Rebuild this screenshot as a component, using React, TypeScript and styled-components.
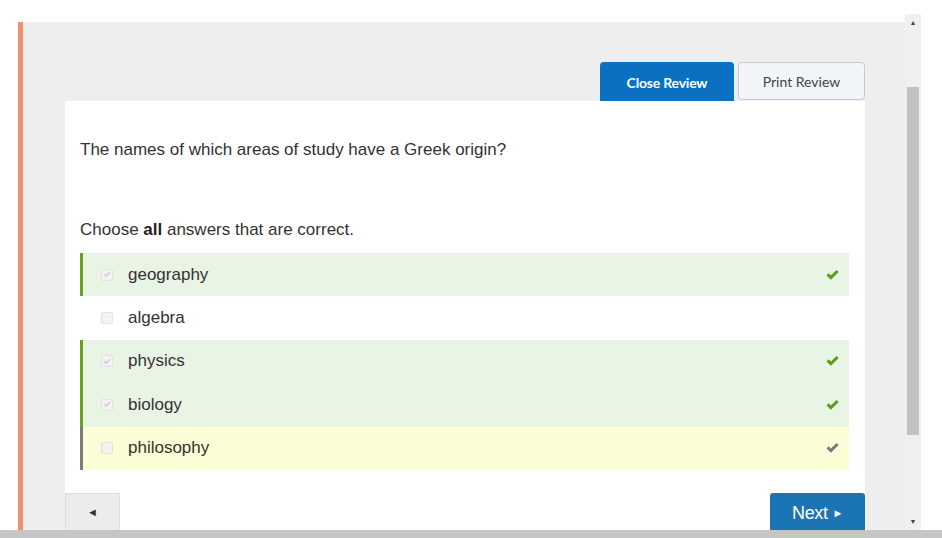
import styled, { createGlobalStyle } from 'styled-components'

const GlobalStyle = createGlobalStyle`
  html, body {
    margin: 0;
    padding: 0;
    background: #fff;
    overflow: hidden;
  }
  * { box-sizing: border-box; }
`

type Status = 'correct' | 'missed' | 'none'

const answers: { label: string; checked: boolean; status: Status }[] = [
  { label: 'geography', checked: true, status: 'correct' },
  { label: 'algebra', checked: false, status: 'none' },
  { label: 'physics', checked: true, status: 'correct' },
  { label: 'biology', checked: true, status: 'correct' },
  { label: 'philosophy', checked: false, status: 'missed' },
]

function Tick({ color }: { color: string }) {
  return (
    <svg width="15" height="12" viewBox="0 0 14 12">
      <path d="M1 6.4 L3.2 4.3 L5.4 6.6 L11 1 L13.2 3.1 L5.4 10.8 Z" fill={color} />
    </svg>
  )
}

export default function App() {
  return (
    <Page>
      <GlobalStyle />
      <Top>
        <LeftGap />
        <Main>
          <ButtonRow>
            <CloseButton>Close Review</CloseButton>
            <PrintButton>Print Review</PrintButton>
          </ButtonRow>
          <Card>
            <Body>
              <Question>The names of which areas of study have a Greek origin?</Question>
              <Instruction>
                Choose <b>all</b> answers that are correct.
              </Instruction>
              <Options>
                {answers.map((a) => (
                  <Option key={a.label} status={a.status}>
                    <Box>{a.checked && <Tick color="#d0d0d0" />}</Box>
                    <Label>{a.label}</Label>
                    {a.status !== 'none' && (
                      <Mark>
                        <Tick color={a.status === 'correct' ? '#5c9c18' : '#7a7a7a'} />
                      </Mark>
                    )}
                  </Option>
                ))}
              </Options>
            </Body>
            <Nav>
              <PrevButton>◄</PrevButton>
              <NextButton>
                Next <Pointer>►</Pointer>
              </NextButton>
            </Nav>
          </Card>
        </Main>
        <Scrollbar>
          <Arrow>▲</Arrow>
          <Track>
            <Thumb />
          </Track>
          <Arrow>▼</Arrow>
        </Scrollbar>
        <RightGap />
      </Top>
      <BottomBar />
    </Page>
  )
}

const Page = styled.div`
  height: 538px;
  display: flex;
  flex-direction: column;
  font-family: 'Liberation Sans', Arial, sans-serif;
`

const Top = styled.div`
  flex: 1;
  display: flex;
  min-height: 0;
`

const LeftGap = styled.div`
  width: 18px;
`

const RightGap = styled.div`
  width: 21px;
`

const Main = styled.div`
  flex: 1;
  margin-top: 22px;
  border-left: 5px solid #ef9270;
  background: #eeeeee;
  padding: 40px 40px 0 42px;
  display: flex;
  flex-direction: column;
  min-height: 0;
`

const ButtonRow = styled.div`
  display: flex;
  justify-content: flex-end;
  align-items: flex-start;
  gap: 4px;
  height: 39px;
`

const CloseButton = styled.button`
  width: 134px;
  height: 40px;
  border: none;
  border-radius: 4px 4px 0 0;
  background: #0a70c2;
  color: #fff;
  font-family: Lato, 'Open Sans', sans-serif;
  font-size: 14px;
  font-weight: 700;
  letter-spacing: -0.2px;
`

const PrintButton = styled.button`
  width: 127px;
  height: 38px;
  border: 1px solid #c6cbd1;
  border-radius: 4px;
  background: #f1f4f8;
  color: #444;
  font-family: Lato, 'Open Sans', sans-serif;
  font-size: 14px;
`

const Card = styled.div`
  flex: 1;
  background: #fff;
  display: flex;
  flex-direction: column;
`

const Body = styled.div`
  padding: 39px 16px 0 15px;
`

const Question = styled.div`
  font-size: 17px;
  line-height: 20px;
  color: #333;
`

const Instruction = styled.div`
  margin-top: 60px;
  font-size: 17px;
  line-height: 20px;
  color: #333;
  b { color: #222; }
`

const Options = styled.div`
  margin-top: 13px;
  display: flex;
  flex-direction: column;
`

const optionBg: Record<Status, string> = {
  correct: '#e8f4e4',
  missed: '#fbfdd6',
  none: '#fff',
}

const optionEdge: Record<Status, string> = {
  correct: '#6a9f22',
  missed: '#7b7b7b',
  none: 'transparent',
}

const Option = styled.div<{ status: Status }>`
  height: 43.4px;
  display: flex;
  align-items: center;
  background: ${(p) => optionBg[p.status]};
  border-left: 3px solid ${(p) => optionEdge[p.status]};
  padding: 0 9px 0 18px;
`

const Box = styled.span`
  width: 12px;
  height: 12px;
  border: 1px solid #e2e2e2;
  border-radius: 2px;
  background: #f3f3f3;
  display: flex;
  align-items: center;
  justify-content: center;
  svg { width: 8px; height: 7px; }
`

const Label = styled.span`
  flex: 1;
  margin-left: 15px;
  font-size: 17px;
  color: #333;
`

const Mark = styled.span`
  display: flex;
  align-items: center;
`

const Nav = styled.div`
  margin-top: 23px;
  display: flex;
  justify-content: space-between;
  align-items: flex-start;
`

const PrevButton = styled.button`
  width: 55px;
  height: 40px;
  background: #ececec;
  border: 1px solid #dddddd;
  border-bottom: none;
  color: #333;
  font-size: 11px;
  padding: 0 0 2px;
`

const NextButton = styled.button`
  width: 95px;
  height: 40px;
  border: none;
  border-radius: 3px 3px 0 0;
  background: #1b75b4;
  color: #fff;
  font-family: 'Liberation Sans', Arial, sans-serif;
  font-size: 18px;
  letter-spacing: -0.3px;
  padding: 2px 0 0;
`

const Pointer = styled.span`
  font-size: 11px;
  vertical-align: 2px;
`

const Scrollbar = styled.div`
  width: 16px;
  margin-top: 14px;
  background: #f0f0f0;
  display: flex;
  flex-direction: column;
  align-items: center;
`

const Arrow = styled.div`
  height: 17px;
  font-size: 7px;
  color: #444;
  display: flex;
  align-items: center;
  justify-content: center;
`

const Track = styled.div`
  flex: 1;
  width: 100%;
  padding: 56px 2px 0 2px;
`

const Thumb = styled.div`
  height: 348px;
  background: #c1c1c1;
`

const BottomBar = styled.div`
  height: 8px;
  background: #c6c6c6;
`
